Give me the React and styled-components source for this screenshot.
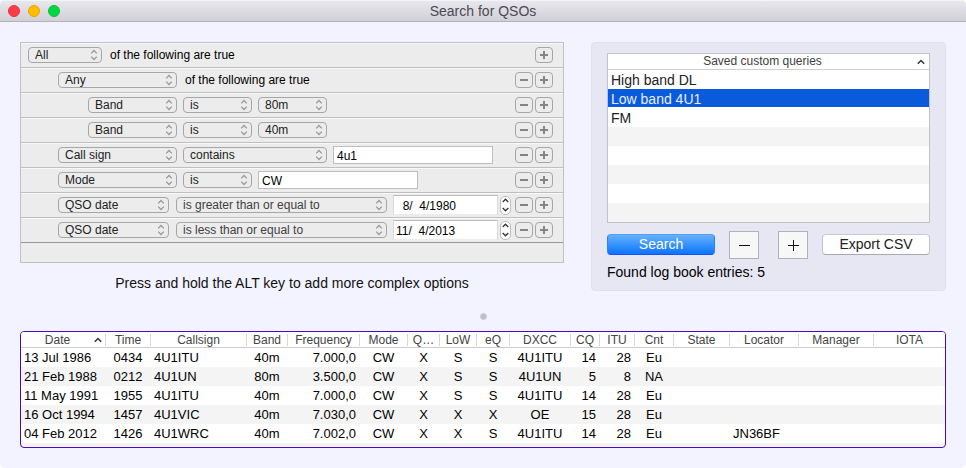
import React from "react";
import styled, { createGlobalStyle } from "styled-components";

const Global = createGlobalStyle`
  *, *::before, *::after { box-sizing: border-box; }
  body {
    margin: 0;
    background: #ffffff;
    font-family: "Liberation Sans", Arial, sans-serif;
    font-size: 14px;
    color: #111111;
  }
  button, input, select { font: inherit; color: inherit; margin: 0; }
`;

const Window = styled.div`
  display: flex;
  flex-direction: column;
  min-height: 100vh;
  background: #f3f3ff;
  border-radius: 5px;
  overflow: hidden;
`;

const TitleBar = styled.header`
  display: grid;
  grid-template-columns: 1fr auto 1fr;
  align-items: center;
  height: 22px;
  padding: 0 8px;
  background: linear-gradient(#e9e7ee, #d2d0d7);
  border-top: 1px solid #f4f3f8;
  border-bottom: 1px solid #b3b1b7;
`;

const Lights = styled.div`
  display: flex;
  gap: 8px;
`;

const Light = styled.button`
  width: 12px;
  height: 12px;
  padding: 0;
  border: 1px solid ${(p) => p.$edge};
  border-radius: 50%;
  background: ${(p) => p.$fill};
`;

const Title = styled.h1`
  margin: 0;
  font-size: 14px;
  line-height: 20px;
  font-weight: normal;
  color: #4b4a4f;
`;

const Content = styled.main`
  display: flex;
  flex-direction: column;
  padding: 20px;
`;

const Top = styled.div`
  display: grid;
  grid-template-columns: minmax(0, 544fr) minmax(0, 355fr);
  gap: 27px;
  align-items: start;
`;

const Editor = styled.section`
  border: 1px solid #c0c0c0;
  background: #ececec;
  padding-bottom: 19px;
  font-size: 12px;
`;

const Rule = styled.div`
  display: flex;
  align-items: center;
  gap: 6px;
  height: 25px;
  padding: 0 10px 1px ${(p) => 7 + p.$level * 30}px;
  border-top: 1px solid #f8f8f8;
  border-bottom: 1px solid #bfbfbf;
  &:last-child { border-bottom-color: #979797; }
`;

const Phrase = styled.span`
  padding-left: 2px;
  color: #000000;
  white-space: nowrap;
`;

const Popup = styled.span`
  position: relative;
  flex: 0 1 ${(p) => p.$width}px;
  min-width: 0;
  height: 16px;
  margin-right: ${(p) => (p.$loose ? 1 : 0)}px;
  color: ${(p) => (p.$soft ? "#404040" : "#222222")};
  svg {
    position: absolute;
    right: 4px;
    top: 2px;
    pointer-events: none;
  }
`;

const PopupSelect = styled.select`
  display: block;
  appearance: none;
  width: 100%;
  height: 16px;
  padding: 0 14px 0 6px;
  border: 1px solid #a6a6a6;
  border-radius: 4px;
  background: transparent;
  line-height: 14px;
  outline: none;
`;

const TextBox = styled.input`
  flex: 0 1 160px;
  min-width: 0;
  height: 18px;
  padding: 2px 3px 0;
  border: 1px solid #bdbdbd;
  background: #ffffff;
  color: #000000;
  outline: none;
`;

const DateBox = styled(TextBox)`
  flex-basis: 105px;
  height: 20px;
  padding: 2px 2px 0;
  border-color: #b9b9b9 #dadada #ececec;
`;

const Stepper = styled.span`
  display: flex;
  flex-direction: column;
  flex: none;
  width: 11px;
  height: 19px;
  margin: 0 -2px 0 -4px;
  border: 1px solid #bcbcbc;
  border-radius: 5px;
  background: #ffffff;
`;

const StepButton = styled.button`
  display: flex;
  flex: 1;
  align-items: center;
  justify-content: center;
  padding: 0;
  border: 0;
  background: none;
`;

const RowActions = styled.div`
  display: flex;
  gap: 2px;
  margin-left: auto;
`;

const RoundButton = styled.button`
  display: flex;
  align-items: center;
  justify-content: center;
  width: 18px;
  height: 16px;
  padding: 0;
  border: 1px solid #a6a6a6;
  border-radius: 4px;
  background: transparent;
`;

const Hint = styled.p`
  margin: 12px 0 0;
  line-height: 16px;
  text-align: center;
`;

const Side = styled.section`
  padding: 10px 15px 9px;
  border: 1px solid #e0e0ec;
  border-radius: 4px;
  background: #e7e7f4;
`;

const Queries = styled.table`
  width: 100%;
  border: 1px solid #c2c2c4;
  border-collapse: separate;
  border-spacing: 0;
  background: #ffffff;
`;

const QueryHead = styled.th`
  height: 16px;
  padding: 0 4px;
  border-bottom: 1px solid #cfcfcf;
  font-size: 12px;
  line-height: 15px;
  font-weight: normal;
  color: #3d3d3d;
`;

const HeadInner = styled.span`
  display: flex;
  align-items: center;
  justify-content: center;
  gap: 4px;
  span { flex: 1; }
`;

const Query = styled.td`
  height: 19px;
  padding: 2px 3px 0;
  line-height: 17px;
  background: ${(p) => (p.$selected ? "#0a5bdb" : p.$shade ? "#f4f4f4" : "#ffffff")};
  color: ${(p) => (p.$selected ? "#e6eeff" : "#222222")};
  box-shadow: ${(p) => (p.$selected ? "inset 0 -1px 0 #ffffff" : "none")};
`;

const Actions = styled.div`
  display: flex;
  align-items: center;
  justify-content: space-between;
  margin-top: 8px;
`;

const PushButton = styled.button`
  flex: 0 1 108px;
  height: 21px;
  margin-bottom: 1px;
  padding: 0;
  border: 1px solid;
  border-color: ${(p) => (p.$primary ? "#4da1f8 #2b83f7 #1a50f5" : "#c8c8d2 #c0c0c8 #a8a8b0")};
  border-radius: 4px;
  background: ${(p) => (p.$primary ? "linear-gradient(#66b1fc, #0c74ff)" : "#ffffff")};
  color: ${(p) => (p.$primary ? "#ffffff" : "#222222")};
  line-height: 19px;
  white-space: nowrap;
`;

const SquarePair = styled.div`
  display: flex;
  gap: 19px;
`;

const SquareButton = styled.button`
  display: flex;
  align-items: center;
  justify-content: center;
  width: 30px;
  height: 28px;
  padding: 0;
  border: 1px solid #b2b2b6;
  background: #f7f7f8;
`;

const Found = styled.p`
  margin: 4px 0 0;
  line-height: 18px;
  color: #000000;
`;

const Grip = styled.div`
  align-self: center;
  width: 7px;
  height: 7px;
  margin: 22px 0 11px;
  border: 1px solid #c9c9d4;
  border-radius: 50%;
  background: #bfbfca;
`;

const LogFrame = styled.div`
  border: 1px solid #4809c0;
  border-radius: 4px;
  overflow: hidden;
  background: #f4f4f4;
  padding-bottom: 4px;
`;

const Log = styled.table`
  width: 100%;
  table-layout: fixed;
  border-collapse: separate;
  border-spacing: 0;
`;

const Col = styled.col`
  width: ${(p) => (p.$width ? `${p.$width}px` : "auto")};
`;

const LogHead = styled.th`
  height: 16px;
  padding: 0;
  border-bottom: 1px solid #cccccc;
  background: #ffffff;
  font-size: 12px;
  line-height: 15px;
  font-weight: normal;
  color: #444444;
`;

const HeadLabel = styled.span`
  display: flex;
  align-items: center;
  height: 12px;
  margin-top: 1px;
  padding-right: ${(p) => (p.$sorted ? 3 : 0)}px;
  line-height: 12px;
  border-right: ${(p) => (p.$last ? "0" : "1px solid #d8d8d8")};
  span { flex: 1; text-align: center; white-space: nowrap; }
`;

const LogRow = styled.tr`
  background: #ffffff;
  &:nth-child(even) { background: #f4f4f4; }
`;

const Cell = styled.td`
  height: 19px;
  padding: 0 4px 0 3px;
  font-size: 13px;
  line-height: 19px;
  white-space: nowrap;
  text-align: ${(p) => p.$align};
  color: #000000;
`;

function UpDown() {
  return (
    <svg width="8" height="12" viewBox="0 0 8 12" fill="none" stroke="#999999" strokeWidth="1.3">
      <path d="M1.2 4.4 4 1.5l2.8 2.9M1.2 7.6 4 10.5l2.8-2.9" />
    </svg>
  );
}

function Chevron({ down, width = 8, height = 6 }) {
  return (
    <svg width={width} height={height} viewBox="0 0 7 5" fill="none" stroke="#333333" strokeWidth="1.3">
      <path d={down ? "M.7 1 3.5 3.8 6.3 1" : "M.7 4 3.5 1.2 6.3 4"} />
    </svg>
  );
}

function Sign({ plus, size = 8, thickness = 2, color = "#858585" }) {
  const c = size / 2;
  return (
    <svg width={size} height={size} viewBox={`0 0 ${size} ${size}`} stroke={color} strokeWidth={thickness}>
      <path d={`M0 ${c}H${size}${plus ? `M${c} 0V${size}` : ""}`} />
    </svg>
  );
}

function Select({ value, width, loose, soft, label }) {
  return (
    <Popup $width={width} $loose={loose} $soft={soft}>
      <PopupSelect aria-label={label} defaultValue={value}>
        <option>{value}</option>
      </PopupSelect>
      <UpDown />
    </Popup>
  );
}

function DateField({ value }) {
  return (
    <>
      <DateBox type="text" aria-label="Date" defaultValue={value} />
      <Stepper>
        <StepButton aria-label="Later"><Chevron width={7} height={5} /></StepButton>
        <StepButton aria-label="Earlier"><Chevron down width={7} height={5} /></StepButton>
      </Stepper>
    </>
  );
}

const rules = [
  { level: 0, fields: [["All", 74]], phrase: true },
  { level: 1, fields: [["Any", 119]], phrase: true },
  { level: 2, fields: [["Band", 89], ["is", 69], ["80m", 69]] },
  { level: 2, fields: [["Band", 89], ["is", 69], ["40m", 69]] },
  { level: 1, fields: [["Call sign", 119], ["contains", 144]], text: "4u1" },
  { level: 1, fields: [["Mode", 119], ["is", 69]], text: "CW" },
  { level: 1, fields: [["QSO date", 111], ["is greater than or equal to", 211]], date: "  8/  4/1980" },
  { level: 1, fields: [["QSO date", 111], ["is less than or equal to", 211]], date: "11/  4/2013" },
];

const fieldLabels = ["Criterion", "Comparison", "Value"];

const queries = ["High band DL", "Low band 4U1", "FM", "", "", "", "", ""];

const columns = [
  ["Date", 85, "left"],
  ["Time", 45, "center"],
  ["Callsign", 96, "left"],
  ["Band", 41, "center"],
  ["Frequency", 72, "right"],
  ["Mode", 48, "center"],
  ["Q…", 32, "center"],
  ["LoW", 37, "center"],
  ["eQ", 33, "center"],
  ["DXCC", 61, "center"],
  ["CQ", 29, "right"],
  ["ITU", 35, "right"],
  ["Cnt", 39, "center"],
  ["State", 56, "center"],
  ["Locator", 69, "left"],
  ["Manager", 75, "left"],
  ["IOTA", null, "left"],
];

const entries = [
  ["13 Jul 1986", "0434", "4U1ITU", "40m", "7.000,0", "CW", "X", "S", "S", "4U1ITU", "14", "28", "Eu", "", "", "", ""],
  ["21 Feb 1988", "0212", "4U1UN", "80m", "3.500,0", "CW", "X", "S", "S", "4U1UN", "5", "8", "NA", "", "", "", ""],
  ["11 May 1991", "1955", "4U1ITU", "40m", "7.000,0", "CW", "X", "S", "S", "4U1ITU", "14", "28", "Eu", "", "", "", ""],
  ["16 Oct 1994", "1457", "4U1VIC", "40m", "7.030,0", "CW", "X", "X", "X", "OE", "15", "28", "Eu", "", "", "", ""],
  ["04 Feb 2012", "1426", "4U1WRC", "40m", "7.002,0", "CW", "X", "X", "S", "4U1ITU", "14", "28", "Eu", "", "JN36BF", "", ""],
];

export default function App() {
  return (
    <>
      <Global />
      <Window>
        <TitleBar>
          <Lights>
            <Light aria-label="Close" $fill="#ff3b47" $edge="#e23640" />
            <Light aria-label="Minimize" $fill="#ffbd00" $edge="#e5a500" />
            <Light aria-label="Zoom" $fill="#00d742" $edge="#0cbd3c" />
          </Lights>
          <Title>Search for QSOs</Title>
        </TitleBar>
        <Content>
          <Top>
            <div>
              <Editor>
                {rules.map((rule, i) => (
                  <Rule key={i} $level={rule.level}>
                    {rule.fields.map(([value, width], j) => (
                      <Select
                        key={j}
                        value={value}
                        width={width}
                        loose={Boolean(rule.date) && j === 0}
                        soft={Boolean(rule.date) && j === 1}
                        label={fieldLabels[j]}
                      />
                    ))}
                    {rule.phrase && <Phrase>of the following are true</Phrase>}
                    {rule.text && <TextBox type="text" aria-label="Value" defaultValue={rule.text} />}
                    {rule.date && <DateField value={rule.date} />}
                    <RowActions>
                      {i > 0 && <RoundButton aria-label="Remove rule"><Sign /></RoundButton>}
                      <RoundButton aria-label="Add rule"><Sign plus /></RoundButton>
                    </RowActions>
                  </Rule>
                ))}
              </Editor>
              <Hint>Press and hold the ALT key to add more complex options</Hint>
            </div>
            <Side>
              <Queries>
                <thead>
                  <tr>
                    <QueryHead>
                      <HeadInner><span>Saved custom queries</span><Chevron /></HeadInner>
                    </QueryHead>
                  </tr>
                </thead>
                <tbody>
                  {queries.map((name, i) => (
                    <tr key={i}>
                      <Query $selected={i === 1} $shade={i % 2 === 1}>{name}</Query>
                    </tr>
                  ))}
                </tbody>
              </Queries>
              <Actions>
                <PushButton $primary>Search</PushButton>
                <SquarePair>
                  <SquareButton aria-label="Delete query"><Sign size={11} thickness={1} color="#111111" /></SquareButton>
                  <SquareButton aria-label="Add query"><Sign plus size={11} thickness={1} color="#111111" /></SquareButton>
                </SquarePair>
                <PushButton>Export CSV</PushButton>
              </Actions>
              <Found>Found log book entries: 5</Found>
            </Side>
          </Top>
          <Grip />
          <LogFrame>
            <Log>
              <colgroup>
                {columns.map(([name, width]) => <Col key={name} $width={width} />)}
              </colgroup>
              <thead>
                <tr>
                  {columns.map(([name], i) => (
                    <LogHead key={name} scope="col">
                      <HeadLabel $sorted={i === 0} $last={i === columns.length - 1}>
                        <span>{name}</span>
                        {i === 0 && <Chevron />}
                      </HeadLabel>
                    </LogHead>
                  ))}
                </tr>
              </thead>
              <tbody>
                {entries.map((entry) => (
                  <LogRow key={entry[0]}>
                    {entry.map((text, i) => (
                      <Cell key={i} $align={columns[i][2]}>{text}</Cell>
                    ))}
                  </LogRow>
                ))}
              </tbody>
            </Log>
          </LogFrame>
        </Content>
      </Window>
    </>
  );
}
